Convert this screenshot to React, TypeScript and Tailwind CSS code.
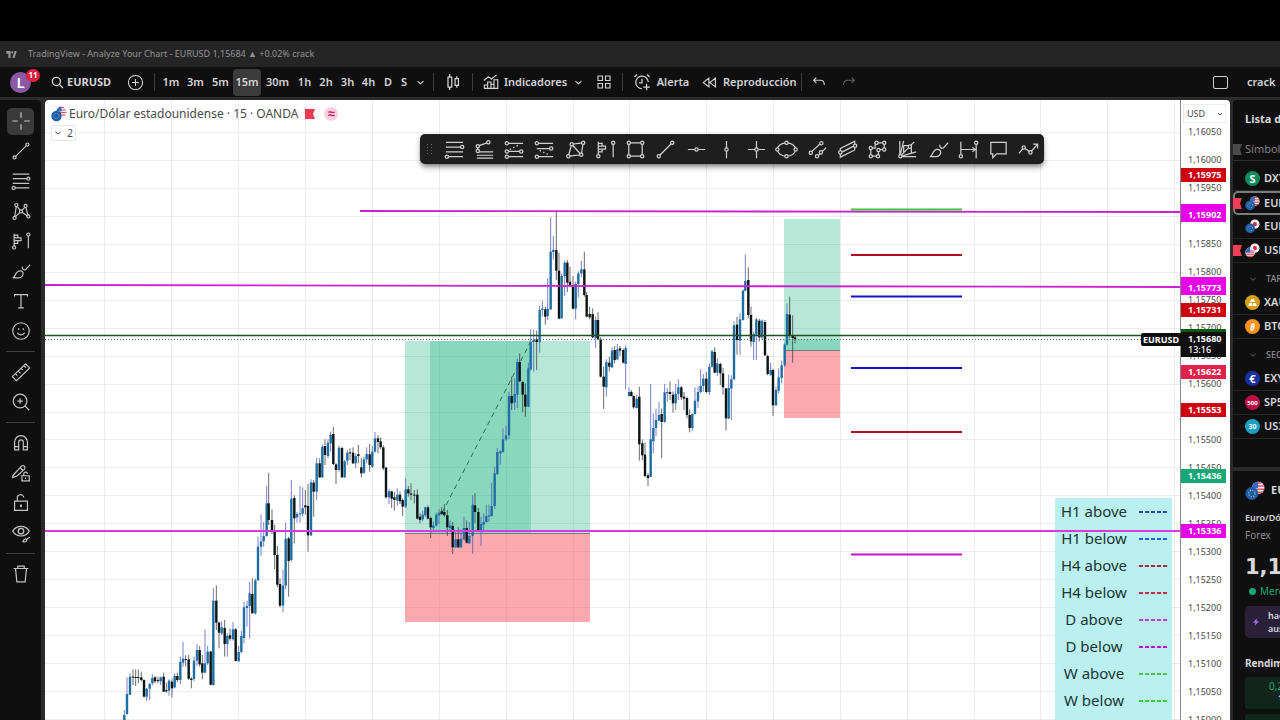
import React from "react";

type Bar = [number, number, number, number, number, 0 | 1];

const VERTICAL_GRID = [104, 171, 238, 305, 372, 439, 506, 573, 629, 706, 773, 840, 907, 974, 1040, 1107, 1174];
const HORIZONTAL_GRID = Array.from({ length: 22 }, (_, i) => 132 + i * 27.95);

// Bars are stored as x, high, body top, body bottom, low, up. Three units make one pixel.
const SEGMENTS: { x: number; y: number; bars: Bar[] }[] = [
  {
    x: 110,
    y: 400,
    bars: [
      [43, 930, 945, 962, 964, 1], [51, 832, 882, 942, 945, 1], [60, 820, 830, 884, 885, 1], [69, 808, 830, 833, 855, 0],
      [77, 808, 831, 834, 858, 0], [85, 808, 831, 834, 850, 0], [94, 815, 832, 840, 845, 0], [102, 838, 840, 890, 893, 0],
      [110, 864, 866, 890, 903, 1], [119, 848, 852, 866, 900, 1], [127, 822, 834, 850, 856, 1], [135, 828, 832, 844, 850, 0],
      [144, 830, 840, 843, 850, 0], [152, 830, 832, 844, 855, 1], [161, 818, 830, 875, 876, 0], [169, 848, 870, 874, 878, 0],
      [177, 838, 842, 872, 887, 1], [186, 838, 845, 865, 893, 0], [194, 820, 828, 862, 865, 1], [202, 818, 828, 840, 846, 0],
      [211, 770, 786, 840, 852, 1], [219, 726, 776, 788, 800, 1], [227, 766, 777, 780, 800, 0], [236, 765, 778, 836, 840, 0],
      [244, 832, 836, 840, 865, 0], [252, 770, 782, 837, 843, 1], [261, 732, 750, 782, 797, 1], [269, 738, 750, 793, 800, 0],
      [277, 765, 790, 818, 838, 0], [285, 688, 790, 818, 820, 1], [293, 738, 755, 790, 795, 1], [302, 753, 755, 854, 856, 0],
      [310, 564, 602, 855, 857, 1], [319, 556, 602, 668, 690, 0], [327, 664, 668, 698, 745, 0], [335, 664, 682, 700, 705, 1],
      [344, 660, 684, 732, 770, 0], [352, 700, 708, 732, 770, 1], [360, 686, 706, 716, 722, 0], [369, 666, 688, 718, 722, 1],
      [377, 684, 688, 783, 785, 0], [386, 738, 756, 784, 785, 1], [394, 692, 708, 756, 760, 1], [402, 606, 622, 714, 730, 1],
      [411, 602, 618, 624, 680, 1], [419, 546, 580, 618, 716, 1], [427, 535, 582, 640, 641, 0], [436, 535, 541, 640, 644, 1],
      [444, 410, 440, 541, 542, 1], [453, 344, 424, 440, 468, 1], [461, 366, 408, 424, 440, 1], [470, 258, 310, 408, 410, 1],
      [476, 218, 310, 360, 375, 0], [486, 328, 360, 394, 402, 0], [494, 374, 390, 465, 508, 0], [502, 438, 465, 554, 562, 0],
      [510, 535, 552, 617, 622, 0], [519, 510, 557, 617, 637, 1], [527, 368, 416, 557, 568, 1], [536, 410, 415, 483, 590, 0],
      [544, 240, 296, 480, 485, 1], [553, 286, 294, 355, 430, 0], [561, 336, 342, 352, 368, 1], [570, 258, 340, 343, 368, 1],
      [578, 262, 325, 341, 350, 1], [586, 270, 316, 322, 344, 0], [594, 252, 318, 406, 455, 0], [603, 238, 247, 406, 408, 1],
      [611, 240, 248, 275, 350, 0], [620, 174, 190, 275, 300, 1], [629, 175, 190, 232, 234, 0], [637, 134, 140, 232, 234, 1],
      [645, 118, 138, 165, 195, 0], [654, 118, 128, 168, 175, 1], [662, 95, 105, 130, 155, 1], [670, 80, 102, 192, 195, 0],
      [678, 190, 193, 210, 252, 0], [687, 136, 143, 210, 215, 1], [696, 140, 144, 232, 234, 0], [704, 180, 184, 232, 234, 1],
      [712, 150, 158, 182, 195, 1], [720, 145, 157, 160, 180, 0], [729, 142, 158, 190, 192, 0], [737, 160, 168, 190, 205, 1],
      [745, 134, 163, 168, 190, 0], [754, 175, 202, 220, 232, 0], [762, 170, 178, 218, 222, 1], [770, 142, 162, 178, 190, 1],
      [779, 132, 163, 195, 215, 0], [787, 138, 155, 200, 204, 1], [795, 96, 115, 155, 158, 1], [804, 106, 115, 126, 160, 0],
      [812, 112, 124, 142, 148, 0], [820, 136, 142, 205, 210, 0], [828, 200, 203, 292, 296, 0], [837, 268, 274, 292, 312, 1],
      [845, 272, 274, 296, 324, 0], [853, 276, 292, 300, 332, 0], [862, 265, 284, 302, 318, 1], [870, 274, 284, 304, 312, 0],
      [878, 296, 300, 320, 348, 0], [887, 236, 268, 320, 324, 1], [895, 258, 268, 280, 290, 0], [903, 250, 280, 284, 300, 0],
    ],
  },
  {
    x: 390,
    y: 200,
    bars: [
      [73, 870, 884, 887, 910, 0], [82, 868, 884, 956, 958, 0], [90, 940, 950, 960, 970, 0], [98, 932, 944, 958, 964, 1],
      [106, 920, 922, 946, 950, 1], [114, 916, 922, 956, 958, 0], [122, 950, 954, 982, 1014, 0], [130, 965, 976, 984, 992, 1],
      [139, 938, 944, 976, 980, 1], [147, 928, 938, 946, 972, 1], [155, 922, 934, 942, 946, 0], [163, 912, 936, 946, 950, 0],
      [172, 930, 946, 982, 1008, 0], [180, 962, 976, 984, 992, 1], [188, 966, 978, 1042, 1062, 0], [197, 990, 1018, 1042, 1044, 1],
      [205, 982, 1018, 1042, 1044, 0], [213, 988, 1016, 1042, 1044, 1], [222, 950, 984, 1018, 1022, 1], [230, 962, 984, 1028, 1030, 0],
      [238, 966, 1008, 1030, 1032, 1], [248, 886, 914, 1008, 1062, 1], [255, 880, 916, 936, 970, 0], [265, 924, 936, 992, 994, 0],
      [273, 950, 972, 992, 1038, 1], [281, 940, 966, 974, 996, 1], [289, 914, 948, 966, 968, 1], [297, 914, 946, 950, 966, 1],
      [305, 848, 918, 948, 950, 1], [314, 800, 820, 918, 926, 1], [322, 744, 756, 822, 826, 1], [331, 750, 754, 760, 794, 1],
      [339, 685, 718, 756, 758, 1], [348, 678, 706, 718, 722, 1], [357, 576, 588, 706, 718, 1], [365, 530, 588, 610, 630, 0],
      [374, 535, 582, 608, 630, 1], [382, 476, 486, 584, 624, 1], [389, 460, 486, 544, 546, 0], [398, 542, 546, 584, 636, 0],
      [406, 550, 584, 620, 650, 0], [415, 488, 505, 620, 622, 1], [422, 388, 426, 508, 512, 1], [431, 390, 420, 426, 515, 1],
      [440, 392, 418, 426, 510, 0], [449, 318, 330, 426, 458, 1], [457, 302, 326, 330, 350, 1], [466, 320, 328, 350, 374, 0],
      [473, 235, 326, 348, 360, 1], [482, 52, 155, 328, 330, 1], [490, 108, 150, 156, 178, 1], [499, 32, 150, 212, 240, 0],
      [507, 158, 212, 356, 358, 0], [515, 220, 228, 355, 356, 1], [524, 182, 188, 228, 288, 1], [532, 180, 188, 248, 276, 0],
      [540, 200, 245, 256, 258, 0], [549, 228, 256, 326, 328, 0], [557, 245, 252, 326, 358, 1], [565, 214, 220, 252, 292, 1],
      [574, 182, 208, 220, 232, 1], [583, 155, 208, 285, 290, 0], [590, 276, 285, 350, 352, 0], [599, 320, 342, 352, 358, 0],
    ],
  },
  {
    x: 590,
    y: 200,
    bars: [
      [8, 325, 342, 412, 414, 0], [17, 350, 360, 414, 444, 1], [24, 336, 360, 418, 420, 0], [32, 412, 418, 530, 533, 0],
      [41, 500, 530, 560, 627, 0], [49, 478, 486, 562, 590, 1], [58, 470, 488, 500, 514, 0], [66, 442, 452, 502, 504, 1],
      [74, 438, 450, 480, 490, 0], [82, 432, 448, 478, 480, 1], [90, 438, 445, 452, 468, 0], [100, 446, 450, 488, 490, 0],
      [107, 436, 444, 492, 568, 1], [117, 562, 576, 588, 590, 1], [124, 570, 576, 588, 590, 0], [131, 586, 588, 622, 626, 0],
      [140, 584, 596, 624, 625, 1], [148, 560, 590, 733, 782, 0], [157, 718, 730, 766, 780, 0], [165, 728, 764, 828, 832, 0],
      [174, 820, 826, 834, 858, 0], [182, 552, 718, 830, 832, 1], [190, 640, 684, 724, 760, 1], [198, 626, 660, 684, 708, 1],
      [207, 606, 645, 662, 664, 1], [215, 626, 642, 666, 775, 0], [224, 552, 577, 666, 668, 1], [232, 565, 576, 580, 605, 1],
      [240, 544, 576, 582, 600, 0], [249, 574, 584, 610, 638, 0], [257, 552, 582, 610, 630, 1], [265, 538, 562, 582, 600, 1],
      [274, 558, 562, 592, 600, 0], [282, 576, 590, 596, 630, 0], [291, 590, 594, 645, 655, 0], [299, 628, 645, 684, 697, 0],
      [307, 640, 642, 684, 692, 1], [315, 562, 602, 642, 644, 1], [324, 560, 576, 604, 624, 1], [332, 508, 558, 576, 580, 1],
      [340, 522, 536, 558, 575, 1], [349, 516, 536, 576, 580, 0], [358, 490, 500, 576, 585, 1], [366, 450, 454, 500, 503, 1],
      [374, 442, 456, 518, 520, 0], [382, 475, 490, 518, 528, 1], [391, 488, 492, 520, 555, 0], [399, 504, 520, 562, 584, 0],
      [408, 565, 565, 655, 692, 0], [416, 524, 564, 656, 657, 1], [424, 526, 538, 566, 660, 1], [432, 364, 376, 538, 540, 1],
      [441, 350, 374, 420, 464, 0], [450, 340, 358, 422, 465, 1], [459, 268, 272, 360, 362, 1], [466, 164, 243, 272, 274, 1],
      [475, 202, 240, 345, 355, 0], [483, 320, 345, 424, 440, 0], [491, 395, 402, 426, 480, 1], [499, 354, 358, 404, 480, 1],
      [508, 356, 362, 412, 424, 0], [516, 358, 362, 412, 420, 1], [525, 360, 366, 466, 468, 0], [533, 464, 468, 522, 526, 0],
      [542, 488, 510, 524, 528, 1], [549, 506, 510, 616, 648, 0], [558, 560, 570, 616, 617, 1], [566, 505, 532, 572, 580, 1],
      [575, 482, 496, 534, 550, 1], [584, 430, 434, 496, 500, 1], [591, 310, 342, 434, 436, 1], [599, 290, 344, 408, 415, 0],
      [608, 346, 408, 414, 488, 0], [615, 405, 412, 417, 430, 0],
    ],
  },
];

const LEVELS = [
  { y: 209.5, color: "#3cc43c" },
  { y: 255, color: "#b50a1e" },
  { y: 296.5, color: "#1212cc" },
  { y: 368, color: "#1212cc" },
  { y: 432, color: "#b50a1e" },
  { y: 554.5, color: "#cc10cc" },
];

const SCALE = [
  "1,16050", "1,16000", "1,15950", "1,15900", "1,15850", "1,15800", "1,15750", "1,15700", "1,15650", "1,15600", "1,15550",
  "1,15500", "1,15450", "1,15400", "1,15350", "1,15300", "1,15250", "1,15200", "1,15150", "1,15100", "1,15050", "1,15000",
];

const TAGS = [
  { price: "1,15975", className: "top-[68px] bg-[#d0000f]" },
  { price: "1,15909", className: "top-[104px] bg-[#e800e8]" },
  { price: "1,15902", className: "top-[108px] bg-[#e800e8]" },
  { price: "1,15778", className: "top-[177px] bg-[#e800e8]" },
  { price: "1,15773", className: "top-[181px] bg-[#e800e8]" },
  { price: "1,15731", className: "top-[203px] bg-[#d0000f]" },
  { price: "1,15687", className: "top-[229px] bg-[#0b5a12]" },
  { price: "1,15622", className: "top-[265px] bg-[#e3204b]" },
  { price: "1,15553", className: "top-[303px] bg-[#d0000f]" },
  { price: "1,15436", className: "top-[369px] bg-[#14a877]" },
  { price: "1,15336", className: "top-[424px] bg-[#e800e8]" },
];

const LEGEND = [
  { label: "H1 above", color: "#2448c8" },
  { label: "H1 below", color: "#2f62e0" },
  { label: "H4 above", color: "#b02840" },
  { label: "H4 below", color: "#c23048" },
  { label: "D above", color: "#c83ad8" },
  { label: "D below", color: "#c000d8" },
  { label: "W above", color: "#4cc850" },
  { label: "W below", color: "#38cc38" },
];

const INTERVALS = [
  { label: "1m", width: "w-[24px]" },
  { label: "3m", width: "w-[25px]" },
  { label: "5m", width: "w-[25px]" },
  { label: "15m", width: "w-[28px]" },
  { label: "30m", width: "w-[33px]" },
  { label: "1h", width: "w-[21px]" },
  { label: "2h", width: "w-[22px]" },
  { label: "3h", width: "w-[21px]" },
  { label: "4h", width: "w-[21px]" },
  { label: "D", width: "w-[18px]" },
  { label: "S", width: "w-[14px]" },
];

function Dot({ x, y }: { x: number; y: number }) {
  return <circle cx={x} cy={y} r="1.7" fill="#1a1a1a" />;
}

const ICONS: Record<string, React.ReactNode> = {
  Cursor: <path d="M12 2.5v6M12 15.500v6M2.500 12h6M15.500 12h6" />,
  "Línea de tendencia": (
    <>
      <path d="M5 19 19 5" />
      <Dot x={5} y={19} />
      <Dot x={19} y={5} />
    </>
  ),
  "Retroceso de Fibonacci": (
    <>
      <path d="M3 4.500h18M3 9.500h16M3 14.500h18M5 19.500h16" />
      <Dot x={20} y={9.5} />
      <Dot x={4} y={19.5} />
    </>
  ),
  Patrón: (
    <>
      <path d="M5 19 7 6l5 6.500L17 7l3 11-8-5.500L5 19Z" />
      <Dot x={5} y={19.5} />
      <Dot x={7} y={5.5} />
      <Dot x={12} y={12.5} />
      <Dot x={17} y={6.5} />
      <Dot x={20} y={18} />
    </>
  ),
  "Perfil de volumen": (
    <>
      <path d="M4.500 4v14M4.500 5.500h4v3h-4M4.500 8.500h7.500v3H4.500M4.500 11.500h4v3h-4M20 6v14" />
      <Dot x={4.5} y={19} />
      <Dot x={20} y={5} />
    </>
  ),
  Pincel: (
    <>
      <path d="M3 19.500c3-1 2.500-4.500 5-6.500 2-1.800 5-1.500 6 .5 1.200 2.500-1 6-4.500 6H3Z" />
      <path d="M13.500 7c-1 2 1.500 4.500 3.500 3.500l5-5.500" />
    </>
  ),
  Texto: <path d="M5 7V5h14v2M12 5v14.500M9 19.500h6" />,
  Emoji: (
    <>
      <circle cx="12" cy="12" r="9" />
      <path d="M8 14c1.500 3 6.500 3 8 0M9.500 9v2M14.500 9v2" />
    </>
  ),
  Regla: <path d="m2.500 17 14.500-14 4.500 4.500L7 21.500 2.500 17ZM6 14l2 2M9 11l2.500 2.500M12 8l2 2M15 5l2.500 2.500" />,
  Ampliar: (
    <>
      <circle cx="11" cy="11" r="7.500" />
      <path d="m16.500 16.500 4.500 4.500M11 8v6M8 11h6" />
    </>
  ),
  Imán: <path d="M5 19.500V11a7 7 0 0 1 14 0v8.500h-4.500V11a2.500 2.500 0 0 0-5 0v8.500H5ZM5 16h4.500M14.500 16H19" />,
  "Modo dibujo": (
    <>
      <path d="m3 15 9.500-10.500c1-1 3-.5 3.500.5.500 1 .5 2-.5 3L8 15l-5 2v-2ZM11 6l3.500 3.500" />
      <path d="M13 15h8v5.500h-8zM15 15v-2a2 2 0 0 1 4 0M17 17v1.500" />
    </>
  ),
  Bloquear: (
    <>
      <path d="M5 10h14v10H5zM8 10V7a3.500 3.500 0 0 1 7-1" />
      <path d="M12 13.500v3" strokeWidth="2" />
    </>
  ),
  Ocultar: (
    <>
      <path d="M3 10c4-7 14-7 18 0-4 7-14 7-18 0Z" />
      <circle cx="12" cy="10" r="3" />
      <path d="M14 21.500c1-3 3-3.500 4-2.500s0 3-4 2.500ZM18.500 18.500l3-2" />
    </>
  ),
  Eliminar: <path d="M4 6h16M8.500 6V3.500h7V6M6 6l1.500 14.500h9L18 6" />,
  "Extensión de Fibonacci": (
    <>
      <path d="M5 8.500 16 4.500M5 8.500v5M6 14.500h15M4 18h17M4 21h17" />
      <Dot x={5} y={8.5} />
      <Dot x={16} y={4.5} />
      <Dot x={5} y={13.5} />
    </>
  ),
  "Posición larga": (
    <>
      <path d="M6 5.500h15M6 14h12M6 19.500h15" />
      <path d="m7 12 10-5" strokeDasharray="1.500 2.500" />
      <Dot x={4} y={5.5} />
      <Dot x={4} y={14} />
      <Dot x={19} y={14} />
      <Dot x={4} y={19.5} />
    </>
  ),
  "Posición corta": (
    <>
      <path d="M6 5.500h15M4 11h14M6 19.500h15" />
      <path d="m7 13 10 5" strokeDasharray="1.500 2.500" />
      <Dot x={4} y={5.5} />
      <Dot x={19} y={11} />
      <Dot x={4} y={19.5} />
    </>
  ),
  "Patrón ABCD": (
    <>
      <path d="M4.500 19 8 6.500 20 5l-2 12.500L4.500 19ZM8 6.500l10 11" />
      <Dot x={4.5} y={19} />
      <Dot x={8} y={6.5} />
      <Dot x={20} y={5} />
      <Dot x={18} y={17.5} />
    </>
  ),
  Rectángulo: (
    <>
      <path d="M5 5h14v14H5z" />
      <Dot x={5} y={5} />
      <Dot x={19} y={5} />
      <Dot x={5} y={19} />
      <Dot x={19} y={19} />
    </>
  ),
  "Línea horizontal": (
    <>
      <path d="M3 12h18" />
      <Dot x={12} y={12} />
    </>
  ),
  "Línea vertical": (
    <>
      <path d="M12 3v18" />
      <Dot x={12} y={12} />
    </>
  ),
  "Línea cruzada": (
    <>
      <path d="M12 3v18M3 12h18" />
      <Dot x={12} y={12} />
    </>
  ),
  Elipse: (
    <>
      <ellipse cx="12" cy="12" rx="9.500" ry="7" />
      <Dot x={2.5} y={12} />
      <Dot x={21.5} y={12} />
      <Dot x={12} y={5} />
      <Dot x={12} y={19} />
    </>
  ),
  "Canal paralelo": (
    <>
      <path d="m5 15 11-10M12 19l9-9" />
      <Dot x={5} y={15.5} />
      <Dot x={16} y={5.5} />
      <Dot x={11.5} y={19} />
      <Dot x={15.5} y={15} />
    </>
  ),
  "Canal plano": (
    <>
      <path d="m4.500 11 15-7.500v9l-15 7.500v-9ZM4.500 15.500l15-7.500" />
      <Dot x={4.5} y={15} />
      <Dot x={20} y={8} />
    </>
  ),
  Polilínea: (
    <>
      <path d="M5 10.500h4.500V5H19v7h-6v7H5v-8.500Z" />
      <Dot x={5} y={10.5} />
      <Dot x={11} y={5} />
      <Dot x={19} y={5} />
      <Dot x={19} y={12} />
      <Dot x={13} y={12.500} />
      <Dot x={12.500} y={19} />
      <Dot x={5} y={19} />
    </>
  ),
  "Abanico de Gann": (
    <>
      <path d="M4 3v16.500h17M4 19.500 8 3M4 19.500 19 4M4 19.500l17-5M8 8h8v8M8 8v8" />
      <Dot x={4.5} y={19} />
      <Dot x={14.5} y={9} />
    </>
  ),
  "Rango de fechas": (
    <>
      <path d="M4 4v15M20 5v16M4 12h15M16 9.500l3 2.500-3 2.500" />
      <Dot x={4} y={19} />
      <Dot x={20} y={5} />
    </>
  ),
  Comentario: <path d="M4 4.500h16v12H10l-4 4v-4H4z" />,
  Trayectoria: (
    <>
      <path d="m2 16 5-6 7 5 7-8M17 6.500h4.500V11" />
      <Dot x={7} y={10} />
      <Dot x={14} y={15} />
    </>
  ),
  Velas: <path d="M8 2.500V6M8 18v3.500M6 6h4.500v12H6zM16.500 5v3M16.500 16v3M14.500 8h4v8h-4z" />,
  Indicadores: <path d="M3 20.500V16h4.500v4.500M7.500 16v-4H12v8.500M12 15h4V9h5v11.500H3M16 12v8M2.500 10l6-5 4 3 7-5.500" />,
  Plantillas: <path d="M4 4h6v6H4zM14 4h6v6h-6zM4 14h6v6H4zM14 14h6v6h-6z" />,
  Alerta: <path d="M19.500 12a7.500 7.500 0 1 0-7.500 8M12 8v5H8.500M3 6l3-3M21 6l-3-3M17.500 14v8M13.500 18h8" />,
  Reproducción: <path d="M11 5v14L2 12l9-7ZM21.500 5v14l-9-7 9-7Z" />,
  Deshacer: <path d="M8 5.500 4 9.500l4 4M4.500 9.500H14c4 0 6 2.500 6 7" />,
  Rehacer: <path d="m16 5.500 4 4-4 4M19.500 9.500H10c-4 0-6 2.500-6 7" />,
  Buscar: (
    <>
      <circle cx="10" cy="10" r="7.500" />
      <path d="m15.500 15.500 6.500 6.500" />
    </>
  ),
  Comparar: (
    <>
      <circle cx="12" cy="12" r="10" />
      <path d="M12 7v10M7 12h10" />
    </>
  ),
  Chevron: <path d="m4 8.500 8 7 8-7" />,
};

function Icon({ name, className = "size-6" }: { name: string; className?: string }) {
  return (
    <svg viewBox="0 0 24 24" className={`shrink-0 ${className}`} fill="none" stroke="currentColor" strokeWidth="1.3">
      {ICONS[name]}
    </svg>
  );
}

const LEFT_TOOLS = [
  ["Cursor", "Línea de tendencia", "Retroceso de Fibonacci", "Patrón", "Perfil de volumen", "Pincel", "Texto", "Emoji"],
  ["Regla", "Ampliar"],
  ["Imán", "Modo dibujo", "Bloquear", "Ocultar"],
  ["Eliminar"],
];

const FLOATING_TOOLS = [
  "Retroceso de Fibonacci", "Extensión de Fibonacci", "Posición larga", "Posición corta", "Patrón ABCD", "Perfil de volumen",
  "Rectángulo", "Línea de tendencia", "Línea horizontal", "Línea vertical", "Línea cruzada", "Elipse", "Canal paralelo",
  "Canal plano", "Polilínea", "Abanico de Gann", "Pincel", "Rango de fechas", "Comentario", "Trayectoria",
];

function Separator() {
  return <span className="h-[18px] w-px shrink-0 bg-[#3d3d3d]" />;
}

function PairIcon({ base = "eu", back = "us", className = "size-4" }: { base?: string; back?: string; className?: string }) {
  return (
    <svg viewBox="0 0 16 16" className={`shrink-0 ${className}`}>
      <circle cx="10.500" cy="5.500" r="5" fill="#f4eef0" />
      {back === "us" ? (
        <>
          <path d="M6 4h9M6 6.500h9.500M8 9h6.500M9 1.500h4" stroke="#e0506a" strokeWidth="1.200" />
          <path d="M5.500 5.500a5 5 0 0 1 5-5v5z" fill="#3a68c0" />
        </>
      ) : (
        <circle cx="10.500" cy="5.500" r="2.200" fill="#dc2848" />
      )}
      {base === "eu" ? (
        <>
          <circle cx="5.500" cy="10" r="5.200" fill="#1c5cab" />
          <circle cx="5.500" cy="10" r="2.600" fill="none" stroke="#b9c98c" strokeWidth=".9" strokeDasharray=".9 1.150" />
        </>
      ) : (
        <>
          <circle cx="5.500" cy="10" r="5.200" fill="#f0e6ea" />
          <path d="M1 10.500h9M1.500 12.500h8M3 14.300h5M5.500 8.500H10" stroke="#d84058" strokeWidth="1" />
          <path d="M.5 10a5 5 0 0 1 5-5v5z" fill="#3464b4" />
        </>
      )}
    </svg>
  );
}

function TitleBar() {
  return (
    <header className="flex h-[26px] items-center bg-[#252525] pl-[6px] text-[9px] text-[#949494]">
      <svg viewBox="0 0 12 8" className="h-[7px] w-[11px]" fill="currentColor">
        <path d="M0 0h5v8H2.500V3H0zM9.500 0H12L9.500 8H7z" />
        <circle cx="6.800" cy="1.500" r="1.300" />
      </svg>
      <span className="ml-[11px] whitespace-nowrap">TradingView - Analyze Your Chart - EURUSD 1,15684 ▲ +0.02% crack</span>
    </header>
  );
}

function TopToolbar() {
  return (
    <nav className="flex h-[30px] items-center overflow-hidden bg-[#0f0f0f] text-[11px] font-semibold whitespace-nowrap text-[#d4d4d4]">
      <button type="button" aria-label="Perfil" className="relative ml-[10px] flex size-[21px] shrink-0 items-center justify-center rounded-full bg-[#8a58a5] text-[15px] text-white">
        L
        <span className="absolute -top-[3px] -right-[9px] flex h-[13px] w-[14px] items-center justify-center rounded-full bg-[#e0203f] text-[8px] font-bold">
          11
        </span>
      </button>
      <button type="button" className="ml-[20px] flex w-[58px] items-center gap-[3px] font-bold">
        <Icon name="Buscar" className="size-[13px] stroke-[2.5]" />
        EURUSD
      </button>
      <button type="button" aria-label="Comparar" className="ml-[18px]">
        <Icon name="Comparar" className="size-[17px] stroke-[1.5]" />
      </button>
      <span className="ml-[10px] flex">
        <Separator />
      </span>
      <div className="ml-[4px] flex items-center">
        {INTERVALS.map(({ label, width }) => (
          <button
            key={label}
            type="button"
            className={`h-[27px] rounded-[4px] ${width} ${label === "15m" ? "bg-[#3b3b3b]" : ""}`}
          >
            {label}
          </button>
        ))}
      </div>
      <button type="button" aria-label="Más intervalos" className="ml-[5px]">
        <Icon name="Chevron" className="size-[9px] stroke-[3]" />
      </button>
      <div className="ml-[8px] flex items-center">
        <Separator />
        <button type="button" aria-label="Velas" className="mx-[9px]">
          <Icon name="Velas" className="size-[20px] stroke-[1.5]" />
        </button>
        <Separator />
        <button type="button" className="ml-[9px] flex items-center gap-1">
          <Icon name="Indicadores" className="size-[18px] stroke-[1.5]" />
          <span className="w-[60px]">Indicadores</span>
        </button>
        <button type="button" aria-label="Más indicadores" className="ml-[10px]">
          <Icon name="Chevron" className="size-[9px] stroke-[3]" />
        </button>
        <button type="button" aria-label="Plantillas" className="mr-[9px] ml-[12px]">
          <Icon name="Plantillas" className="size-[18px] stroke-[1.5]" />
        </button>
        <Separator />
        <button type="button" className="ml-[9px] flex items-center gap-1">
          <Icon name="Alerta" className="size-[20px] stroke-[1.5]" />
          <span className="w-[34px]">Alerta</span>
        </button>
        <button type="button" className="ml-[12px] flex items-center gap-[6px]">
          <Icon name="Reproducción" className="size-[15px] stroke-[1.8]" />
          <span className="w-[70px]">Reproducción</span>
        </button>
        <span className="ml-[8px] flex">
          <Separator />
        </span>
        <button type="button" aria-label="Deshacer" className="ml-[9px]">
          <Icon name="Deshacer" className="size-[16px] stroke-[1.6]" />
        </button>
        <button type="button" aria-label="Rehacer" className="ml-[14px] text-[#626262]">
          <Icon name="Rehacer" className="size-[16px] stroke-[1.6]" />
        </button>
      </div>
      <button type="button" aria-label="Pantalla completa" className="ml-auto h-[13px] w-[15px] shrink-0 rounded-[2px] border border-[#d0d0d0]" />
      <div className="w-[52px] shrink-0 pl-[19px]">
        <button type="button">crack</button>
      </div>
    </nav>
  );
}

function LeftToolbar() {
  return (
    <aside className="w-[41px] shrink-0 rounded-tr-[4px] bg-[#0f0f0f] pt-[6px] text-[#c4c4c4]">
      {LEFT_TOOLS.map((group, i) => (
        <div key={group[0]}>
          {i > 0 && <div className="mx-[6px] my-[5px] h-px bg-[#3f3f3f]" />}
          {group.map((name) => (
            <button key={name} type="button" aria-label={name} className="flex h-[30px] w-full items-center justify-center">
              <span className={`flex size-[27px] items-center justify-center rounded-[5px] ${name === "Cursor" ? "bg-[#3a3a3a]" : ""}`}>
                <Icon name={name} className="size-[22px]" />
              </span>
            </button>
          ))}
        </div>
      ))}
    </aside>
  );
}

function Candle({ bar, x, y }: { bar: Bar; x: number; y: number }) {
  const [cx, high, top, bottom, low, up] = bar;
  const px = x + cx / 3;
  return (
    <>
      <line x1={px} x2={px} y1={y + high / 3} y2={y + low / 3} stroke={up ? "#4f57bd" : "#3c3c3c"} strokeWidth="0.9" strokeOpacity="0.85" />
      <rect x={px - 1.2} y={y + top / 3} width="2.4" height={Math.max(1, (bottom - top) / 3)} fill={up ? "#1d6fa3" : "#0c1418"} />
    </>
  );
}

function PriceChart() {
  return (
    <svg viewBox="45 100 1135 620" preserveAspectRatio="xMinYMin slice" className="block h-full min-h-[620px] w-full">
      <g stroke="#000" strokeOpacity="0.07">
        {VERTICAL_GRID.map((x) => (
          <line key={x} x1={x + 0.5} x2={x + 0.5} y1="100" y2="720" />
        ))}
        {HORIZONTAL_GRID.map((y) => (
          <line key={y} x1="45" x2="1180" y1={Math.round(y) + 0.5} y2={Math.round(y) + 0.5} />
        ))}
      </g>

      <g fill="#11b07a">
        <rect x="405" y="341" width="185" height="193" fillOpacity="0.3" />
        <rect x="430" y="341" width="101" height="193" fillOpacity="0.28" />
        <rect x="784" y="219" width="56" height="132" fillOpacity="0.3" />
        <rect x="784" y="339" width="56" height="12" fillOpacity="0.28" />
      </g>
      <g fill="#f7525f" fillOpacity="0.5">
        <rect x="405" y="534" width="185" height="88" />
        <rect x="784" y="351" width="56" height="67" />
      </g>
      <path d="M405 533.500h185M784 350.500h56" stroke="#7a7888" />
      <path d="M442 513 531 341" stroke="#2c6b56" strokeDasharray="5 4" />

      {SEGMENTS.map(({ x, y, bars }) => bars.map((bar) => <Candle key={`${x}-${bar[0]}`} bar={bar} x={x} y={y} />))}

      <path d="M45 339.500h1135" stroke="#666" strokeDasharray="1 2" />
      <path d="M45 335.500h1135" stroke="#1d5424" strokeWidth="1.500" />
      <path d="M360 211 1180 212M45 285 1180 287" stroke="#cb22cf" strokeWidth="1.800" />
      {LEVELS.map(({ y, color }) => (
        <line key={y} x1="851" x2="962" y1={y} y2={y} stroke={color} strokeWidth="2.200" />
      ))}
    </svg>
  );
}

function ChartHeader() {
  return (
    <div className="absolute top-[5px] left-[6px] text-[#4a4a4a]">
      <div className="flex h-[17px] items-center">
        <PairIcon />
        <h1 className="ml-[2px] text-[12px] whitespace-nowrap">Euro/Dólar estadounidense · 15 · OANDA</h1>
        <svg viewBox="0 0 10 10" className="ml-[7px] size-[10px]" fill="#f0384f">
          <path d="M0 0h10L8 5l2 5H0z" />
        </svg>
        <span className="ml-[9px] flex size-[14px] items-center justify-center rounded-full bg-[#fad0e0] text-[13px] leading-none font-bold text-[#c8185c]">
          ≈
        </span>
      </div>
      <button type="button" className="mt-[3px] flex h-[16px] w-[25px] items-center justify-center gap-[5px] rounded-[2px] border border-[#e4e4e4] bg-white text-[10px]">
        <Icon name="Chevron" className="size-[8px] stroke-[3]" />2
      </button>
    </div>
  );
}

function FloatingToolbar() {
  return (
    <div className="absolute top-[34px] left-[375px] flex h-[30px] w-[624px] items-center rounded-[5px] bg-[#1e1e1e] text-[#cfcfcf] shadow-md shadow-black/40">
      <svg viewBox="0 0 8 12" className="ml-[6px] h-[12px] w-[8px]" fill="#666">
        {[1, 4, 7, 10].map((y) => (
          <path key={y} d={`M1 ${y}h1v1H1zM5 ${y}h1v1H5z`} />
        ))}
      </svg>
      <div className="ml-[5px] flex flex-1">
        {FLOATING_TOOLS.map((name) => (
          <button key={name} type="button" aria-label={name} className="flex flex-1 justify-center">
            <Icon name={name} className="size-[23px]" />
          </button>
        ))}
      </div>
    </div>
  );
}

function Legend() {
  return (
    <div className="absolute top-[398px] right-[8px] h-[222px] w-[117px] bg-[#baf1f0]">
      {LEGEND.map(({ label, color }) => (
        <div key={label} className="flex h-[27px] items-center text-[15px] text-[#1c3434]">
          <span className="w-[78px] text-center whitespace-nowrap">{label}</span>
          <svg viewBox="0 0 28 2" className="ml-[6px] h-[2px] w-[28px]">
            <path d="M0 1h28" stroke={color} strokeWidth="2" strokeDasharray="4 2" />
          </svg>
        </div>
      ))}
    </div>
  );
}

function PriceAxis() {
  return (
    <div className="relative w-[50px] shrink-0 border-l border-[#888] text-[9px] text-[#484848]">
      <ol className="pt-[18px]">
        {SCALE.map((price) => (
          <li key={price} className="flex h-[28px] items-center pl-[7px]">
            {price}
          </li>
        ))}
      </ol>
      <div className="absolute top-[4px] left-[2px] flex h-[19px] w-[43px] items-center border border-[#ededed] bg-white">
        <select aria-label="Divisa" className="w-full appearance-none pl-[3px] text-[9px] outline-none">
          <option>USD</option>
        </select>
        <Icon name="Chevron" className="mr-[2px] size-[6px] stroke-[4]" />
      </div>
      {TAGS.map(({ price, className }) => (
        <div key={price} className={`absolute left-0 flex h-[14px] w-[45px] items-center pl-[7px] font-bold text-white ${className}`}>
          {price}
        </div>
      ))}
      <div className="absolute top-[232px] left-0 h-[25px] w-[45px] bg-[#0f0f0f] pt-px pl-[7px] leading-[11px] font-bold text-white">
        1,15680
        <br />
        <span className="font-medium">13:16</span>
      </div>
      <div className="absolute top-[233px] right-[49px] flex h-[13px] w-[40px] items-center justify-center rounded-l-[2px] bg-[#0f0f0f] font-bold text-white">
        EURUSD
      </div>
    </div>
  );
}

function Flag({ color }: { color: string }) {
  return (
    <svg viewBox="0 0 9 11" className="absolute left-0 h-[11px] w-[9px]" fill={color}>
      <path d="M0 0h9L7 5.500 9 11H0z" />
    </svg>
  );
}

function Coin({ className, children }: { className: string; children: React.ReactNode }) {
  return (
    <span className={`flex size-[15px] shrink-0 items-center justify-center rounded-full leading-none font-bold text-white ${className}`}>
      {children}
    </span>
  );
}

function SymbolRow({ icon, name, flagged, selected }: { icon: React.ReactNode; name: string; flagged?: boolean; selected?: boolean }) {
  return (
    <li
      className={`relative flex h-[24px] w-[180px] items-center gap-1 pl-[12px] ${
        selected ? "rounded-[5px] outline-2 -outline-offset-2 outline-[#7c7c7c]" : "border-b border-[#262626]"
      }`}
    >
      {flagged && <Flag color="#ef3e56" />}
      {icon}
      {name}
    </li>
  );
}

function ListGroup({ title, children }: { title: string; children: React.ReactNode }) {
  return (
    <>
      <h3 className="flex h-[28px] items-center gap-[9px] pt-[4px] pl-[16px] text-[9px] font-medium text-[#8d8d8d]">
        <Icon name="Chevron" className="size-[8px] stroke-2" />
        {title}
      </h3>
      <ul>{children}</ul>
    </>
  );
}

function WatchList() {
  return (
    <section className="h-[367px] rounded-tl-[4px] bg-[#0f0f0f] text-[11px] font-semibold whitespace-nowrap text-[#d8d8d8]">
      <h2 className="flex h-[38px] items-center pl-[12px] font-bold">Lista de seguimiento</h2>
      <div className="relative flex h-[23px] items-center border-b border-[#2c2c2c] pl-[12px] font-normal text-[#808080]">
        <Flag color="#4a4a4a" />
        Símbolo
      </div>
      <ul className="pt-[6px]">
        <SymbolRow name="DXY" icon={<Coin className="bg-[#0c8a5c] text-[11px]">S</Coin>} />
        <SymbolRow name="EURUSD" flagged selected icon={<PairIcon className="size-[15px]" />} />
        <SymbolRow name="EURJPY" icon={<PairIcon back="jp" className="size-[15px]" />} />
        <SymbolRow name="USDJPY" flagged icon={<PairIcon base="us" back="jp" className="size-[15px]" />} />
      </ul>
      <ListGroup title="TARGET">
        <SymbolRow
          name="XAUUSD"
          icon={
            <Coin className="bg-[#d8a010]">
              <svg viewBox="0 0 10 8" className="h-[7px] w-[9px]" fill="#fff">
                <path d="M3.500 0h3L8 3.500H2zM1.500 4.500h3L5 8H0zM5.500 4.500h3L10 8H5.800z" />
              </svg>
            </Coin>
          }
        />
        <SymbolRow name="BTCUSD" icon={<Coin className="bg-[#f7931a] text-[9px] italic">₿</Coin>} />
      </ListGroup>
      <ListGroup title="SECTORES">
        <SymbolRow name="EXY" icon={<Coin className="bg-[#1c2fa0] text-[11px]">€</Coin>} />
        <SymbolRow name="SP500" icon={<Coin className="bg-[#c00f48] text-[6px]">500</Coin>} />
        <SymbolRow name="US30" icon={<Coin className="bg-[#1ba0c4] text-[7px]">30</Coin>} />
      </ListGroup>
    </section>
  );
}

function SymbolDetails() {
  return (
    <section className="mt-[4px] flex-1 bg-[#0f0f0f] pl-[12px] text-[10px] whitespace-nowrap text-[#d8d8d8]">
      <div className="flex h-[39px] items-center gap-[6px] text-[11px] font-bold">
        <PairIcon className="size-[20px]" />
        EURUSD
      </div>
      <p className="h-[18px] text-[9px] leading-[16px] font-semibold">Euro/Dólar estadounidense</p>
      <p className="h-[19px] text-[#8c8c8c]">Forex</p>
      <p className="h-[36px] font-['DejaVu_Sans',sans-serif] text-[21px] leading-[40px] font-bold">1,15680</p>
      <p className="mt-[1px] flex h-[14px] items-center gap-[4px] text-[#16a877]">
        <span className="ml-[4px] size-[7px] shrink-0 rounded-full bg-current" />
        Mercado abierto
      </p>
      <div className="mt-[8px] flex h-[32px] w-[160px] items-center gap-[9px] rounded-[5px] bg-[#2a2039] pl-[8px] text-[9px] leading-[13px] font-semibold">
        <svg viewBox="0 0 8 10" className="h-[8px] w-[6px]" fill="#9b6fe8">
          <path d="M5 0 0 6h3L2.500 10 8 4H5z" />
        </svg>
        <span>
          hace 2 horas
          <br />
          aus dem Markt
        </span>
      </div>
      <h3 className="mt-[18px] h-[21px] font-bold">Rendimiento</h3>
      <div className="h-[32px] w-[76px] rounded-[3px] bg-[#10261d] pt-[3px] text-center leading-[13px]">
        <span className="text-[#16a877]">0,23%</span>
        <br />
        1S
      </div>
      <div className="mt-[5px] h-[6px] w-[76px] rounded-t-[3px] bg-[#10261d]" />
    </section>
  );
}

export default function App() {
  return (
    <div className="flex h-screen min-h-[720px] w-full flex-col overflow-hidden bg-black pt-[41px] font-['Noto_Sans',sans-serif]">
      <TitleBar />
      <TopToolbar />
      <div className="flex min-h-0 flex-1 bg-[#2b2b2b] pt-[3px]">
        <LeftToolbar />
        <main className="ml-[4px] flex min-w-0 flex-1 overflow-hidden rounded-t-[4px] bg-white">
          <div className="relative min-w-0 flex-1">
            <PriceChart />
            <ChartHeader />
            <FloatingToolbar />
            <Legend />
            <div className="absolute top-[430px] left-0 h-[2px] w-full bg-[#d93add]" />
          </div>
          <PriceAxis />
        </main>
        <aside className="ml-[3px] flex w-[47px] shrink-0 flex-col overflow-hidden">
          <WatchList />
          <SymbolDetails />
        </aside>
      </div>
    </div>
  );
}
